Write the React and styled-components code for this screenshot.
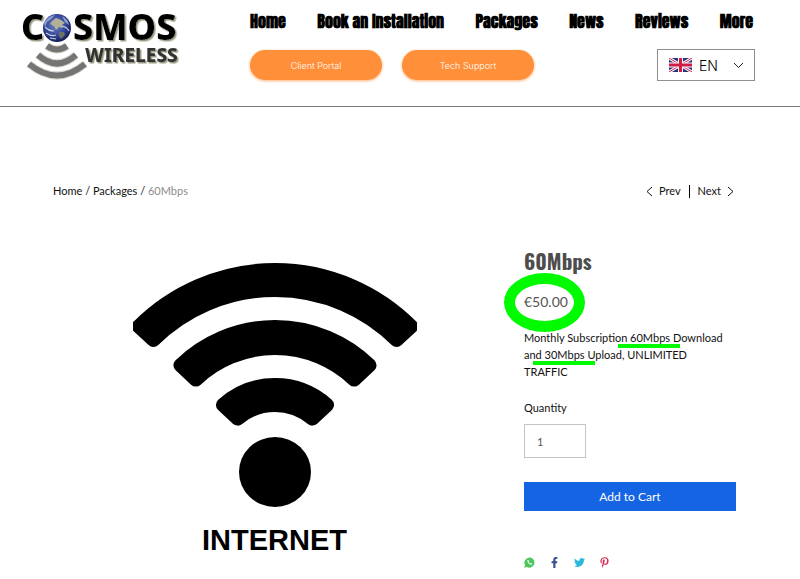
import styled, { createGlobalStyle } from "styled-components"
import { FaFacebookF, FaTwitter, FaPinterestP } from "react-icons/fa"

const colors = {
    text: "#111111",
    title: "#4d4d4d",
    muted: "#8c8c8c",
    orange: "#ff8f38",
    blue: "#1464e4",
    marker: "#00fb00",
    border: "#c4c4c4",
    line: "#7d7d7d",
}

const GlobalStyle = createGlobalStyle`
    * {
        box-sizing: border-box;
    }

    body {
        margin: 0;
        background: #ffffff;
        color: ${colors.text};
        font-family: Lato, "Open Sans", sans-serif;
        font-size: 11px;
        line-height: 18px;
    }

    a {
        color: inherit;
        text-decoration: none;
    }
`

const Header = styled.header`
    display: flex;
    gap: 60px;
    height: 107px;
    padding: 2px 45px 0 10px;
    border-bottom: 1px solid ${colors.line};
`

const Logo = styled.svg`
    flex: none;
    width: 180px;
    height: 84px;
`

const HeaderContent = styled.div`
    flex: 1;
    display: flex;
    flex-direction: column;
    gap: 17px;
    padding-top: 8px;
`

const Nav = styled.nav`
    display: flex;
    justify-content: space-between;
    padding-right: 2px;
    color: #000000;
    font-family: Impact, Anton, Oswald, sans-serif;
    font-size: 16px;
    font-weight: bold;
    line-height: 22px;
    white-space: nowrap;
`

const Actions = styled.div`
    display: flex;
    align-items: center;
    gap: 20px;
`

const PillButton = styled.button`
    width: 132px;
    height: 30px;
    border: none;
    border-radius: 15px;
    background: ${colors.orange};
    box-shadow: 0 1px 3px rgba(255, 143, 56, 0.7);
    color: #ffffff;
    font-family: Inter, sans-serif;
    font-size: 9px;
    font-weight: 300;
`

const Language = styled.div`
    position: relative;
    width: 98px;
    height: 32px;
    margin-left: auto;
`

const LanguageSelect = styled.select`
    width: 100%;
    height: 100%;
    padding: 0 0 0 41px;
    border: 1px solid #8f8f8f;
    border-radius: 0;
    appearance: none;
    background: #ffffff;
    color: #000000;
    font-family: Inter, sans-serif;
    font-size: 14px;
    font-weight: 300;
`

const Flag = styled.svg`
    position: absolute;
    top: 9px;
    left: 12px;
    width: 23px;
    height: 14px;
    pointer-events: none;
`

const SelectArrow = styled.svg`
    position: absolute;
    top: 13px;
    right: 11px;
    width: 11px;
    height: 7px;
    pointer-events: none;
`

const Main = styled.main`
    padding: 75px 64px 0 53px;
`

const TopRow = styled.div`
    display: flex;
    justify-content: space-between;
    margin-bottom: 47px;
`

const Crumb = styled.span`
    color: ${colors.muted};
`

const Pager = styled.nav`
    display: flex;
    align-items: center;
    gap: 8px;
    padding-right: 2px;
`

const PagerLink = styled.a`
    display: flex;
    align-items: center;
    gap: 6px;
`

const Divider = styled.span`
    width: 1px;
    height: 13px;
    background: #000000;
`

const Chevron = styled.svg`
    width: 7px;
    height: 11px;
`

const Product = styled.section`
    display: grid;
    grid-template-columns: minmax(0, 1fr) 212px;
    gap: 28px;
`

const Figure = styled.figure`
    display: flex;
    flex-direction: column;
    align-items: center;
    gap: 16px;
    margin: 0;
    padding-top: 16px;
`

const WifiDrawing = styled.svg`
    width: 284px;
    height: 245px;
`

const Caption = styled.figcaption`
    color: #000000;
    font-family: "Liberation Sans", sans-serif;
    font-size: 29px;
    font-weight: bold;
    line-height: 32px;
`

const Details = styled.div`
    display: flex;
    flex-direction: column;
    align-items: flex-start;
`

const Title = styled.h1`
    margin: 0 0 16px;
    color: ${colors.title};
    font-family: Oswald, Impact, Anton, sans-serif;
    font-size: 21px;
    font-weight: bold;
    line-height: 28px;
`

const Price = styled.div`
    position: relative;
    margin-bottom: 16px;
    color: #555555;
    font-size: 14px;
    line-height: 22px;
`

const Circle = styled.span`
    position: absolute;
    top: -18px;
    left: -20px;
    width: 81px;
    height: 59px;
    border: 11px solid ${colors.marker};
    border-radius: 50%;
`

const Description = styled.p`
    margin: 0 0 19px;
    line-height: 17px;
`

const Marked = styled.span`
    position: relative;

    &::after {
        content: "";
        position: absolute;
        left: -12px;
        right: -10px;
        bottom: -4px;
        height: 4px;
        background: ${colors.marker};
    }
`

const Label = styled.label`
    margin-bottom: 7px;
`

const QuantityInput = styled.input`
    width: 62px;
    height: 34px;
    margin-bottom: 24px;
    padding: 0 12px;
    border: 1px solid ${colors.border};
    color: #555555;
    font-family: inherit;
    font-size: 11px;
`

const CartButton = styled.button`
    width: 100%;
    height: 29px;
    margin-bottom: 46px;
    border: none;
    background: ${colors.blue};
    color: #ffffff;
    font-family: inherit;
    font-size: 12px;
`

const Share = styled.div`
    display: flex;
    gap: 14px;
`

const ShareLink = styled.a`
    display: flex;
    color: ${({ $color }) => $color};
    font-size: 11px;
`

const WhatsappIcon = styled.svg`
    width: 11px;
    height: 11px;
`

const navItems = ["Home", "Book an Installation", "Packages", "News", "Reviews", "More"]

// Ring segment around (142, 200), opened upwards; the round stroke softens its corners.
function bandPath(outer, inner) {
    const round = 7
    const point = (r, side) => {
        const angle = (47 * Math.PI) / 180 - round / r
        return `${142 + side * r * Math.sin(angle)} ${200 - r * Math.cos(angle)}`
    }
    const ro = outer - round
    const ri = inner + round
    return `M${point(ro, -1)} A${ro} ${ro} 0 0 1 ${point(ro, 1)} L${point(ri, 1)} A${ri} ${ri} 0 0 0 ${point(ri, -1)} Z`
}

function CosmosLogo() {
    return (
        <Logo viewBox="-10 -8 180 84" role="img" aria-label="Cosmos Wireless">
            <defs>
                <radialGradient id="globe" cx="45%" cy="40%" r="60%">
                    <stop offset="0" stopColor="#6f87c4" />
                    <stop offset="0.6" stopColor="#35489a" />
                    <stop offset="1" stopColor="#141d55" />
                </radialGradient>
                <filter id="bevel" x="-10%" y="-10%" width="120%" height="130%">
                    <feDropShadow dx="1.5" dy="1.5" stdDeviation="0.5" floodColor="#8d8b72" floodOpacity="0.9" />
                </filter>
            </defs>
            <g fill="none" stroke="#d8d6cb" strokeWidth="8">
                <path d="M27 36 Q37 43 47 36" />
                <path d="M18 45 Q37 62 56 45" />
                <path d="M9 54 Q37 77 65 54" />
            </g>
            <g fill="none" stroke="#747474" strokeWidth="6">
                <path d="M27 36 Q37 43 47 36" />
                <path d="M18 45 Q37 62 56 45" />
                <path d="M9 54 Q37 77 65 54" />
            </g>
            <g filter="url(#bevel)" fontFamily="Noto Sans, sans-serif" fontWeight="800">
                <text x="1" y="30" fontSize="36" fill="#050505">C</text>
                <text x="53" y="30" fontSize="36" fill="#050505">SMOS</text>
                <text x="65" y="52" fontSize="19" fill="#303030">WIRELESS</text>
            </g>
            <circle cx="37" cy="18" r="14" fill="url(#globe)" />
            <path d="M24 13 Q28 6 35 5 L31 9 L27 12 L25 17 Z M42 6 Q48 9 49 15 L45 12 Z" fill="#8fa0d2" />
            <path d="M32 11 L36 8 L41 10 L45 13 L42 15 L43 18 L39 17 L36 20 L34 16 L30 14 Z" fill="#b3b09a" />
            <path d="M39 22 L44 22 L45 25 L41 29 L39 26 Z" fill="#6c7263" />
            <path d="M25 17 Q29 21 34 21 M26 23 Q32 27 36 25 M42 16 Q47 17 49 21 M30 28 L36 29" stroke="#c8d0e8" strokeWidth="1.2" fill="none" />
        </Logo>
    )
}

function UkFlag() {
    return (
        <Flag viewBox="0 0 23 14" aria-hidden="true">
            <path d="M0 0H23V14H0Z" fill="#29337a" />
            <path d="M0 0L23 14M23 0L0 14" stroke="#ffffff" strokeWidth="3" />
            <path d="M0 0L23 14M23 0L0 14" stroke="#d8164a" strokeWidth="1" />
            <path d="M11.5 0V14M0 7H23" stroke="#ffffff" strokeWidth="5" />
            <path d="M11.5 0V14M0 7H23" stroke="#d01c46" strokeWidth="3" />
        </Flag>
    )
}

function WifiFigure() {
    return (
        <Figure>
            <WifiDrawing viewBox="0 0 284 245" aria-hidden="true">
                <g stroke="#000000" strokeWidth="14" strokeLinejoin="round">
                    <path d={bandPath(200, 166)} />
                    <path d={bandPath(143, 108)} />
                    <path d={bandPath(85, 51)} />
                </g>
                <ellipse cx="142" cy="209" rx="36" ry="35" />
            </WifiDrawing>
            <Caption>INTERNET</Caption>
        </Figure>
    )
}

function SiteHeader() {
    return (
        <Header>
            <CosmosLogo />
            <HeaderContent>
                <Nav>
                    {navItems.map((item) => (
                        <a href="#" key={item}>{item}</a>
                    ))}
                </Nav>
                <Actions>
                    <PillButton>Client Portal</PillButton>
                    <PillButton>Tech Support</PillButton>
                    <Language>
                        <LanguageSelect aria-label="Language">
                            <option>EN</option>
                        </LanguageSelect>
                        <UkFlag />
                        <SelectArrow viewBox="0 0 11 7" fill="none" stroke="#222222">
                            <path d="M1 1L5.5 5.5L10 1" />
                        </SelectArrow>
                    </Language>
                </Actions>
            </HeaderContent>
        </Header>
    )
}

function ProductDetails() {
    return (
        <Details>
            <Title>60Mbps</Title>
            <Price>
                €50.00
                <Circle />
            </Price>
            <Description>
                Monthly Subscription <Marked>60Mbps</Marked> Download
                <br />
                and <Marked>30Mbps</Marked> Upload, UNLIMITED
                <br />
                TRAFFIC
            </Description>
            <Label htmlFor="quantity">Quantity</Label>
            <QuantityInput id="quantity" type="text" inputMode="numeric" defaultValue="1" />
            <CartButton>Add to Cart</CartButton>
            <Share>
                <ShareLink href="#" aria-label="WhatsApp" $color="#4fc75c">
                    <WhatsappIcon viewBox="0 0 11 11">
                        <path d="M0.3 10.7L1 8A5 5 0 1 1 3 10Z" fill="currentColor" />
                        <path d="M3.5 3C3 5.5 5.5 8 8 7.5L8 6.5L6.8 6L6 6.6L4.5 5L5 4.3L4.4 3Z" fill="#ffffff" />
                    </WhatsappIcon>
                </ShareLink>
                <ShareLink href="#" aria-label="Facebook" $color="#354d8c"><FaFacebookF /></ShareLink>
                <ShareLink href="#" aria-label="Twitter" $color="#2cb8dc"><FaTwitter /></ShareLink>
                <ShareLink href="#" aria-label="Pinterest" $color="#d9264f"><FaPinterestP /></ShareLink>
            </Share>
        </Details>
    )
}

function App() {
    return (
        <>
            <GlobalStyle />
            <SiteHeader />
            <Main>
                <TopRow>
                    <nav aria-label="Breadcrumb">
                        <a href="#">Home</a> / <a href="#">Packages</a> / <Crumb>60Mbps</Crumb>
                    </nav>
                    <Pager aria-label="Products">
                        <PagerLink href="#">
                            <Chevron viewBox="0 0 7 11" fill="none" stroke="#111111"><path d="M6 1L1 5.5L6 10" /></Chevron>
                            Prev
                        </PagerLink>
                        <Divider />
                        <PagerLink href="#">
                            Next
                            <Chevron viewBox="0 0 7 11" fill="none" stroke="#111111"><path d="M1 1L6 5.5L1 10" /></Chevron>
                        </PagerLink>
                    </Pager>
                </TopRow>
                <Product>
                    <WifiFigure />
                    <ProductDetails />
                </Product>
            </Main>
        </>
    )
}

export default App
